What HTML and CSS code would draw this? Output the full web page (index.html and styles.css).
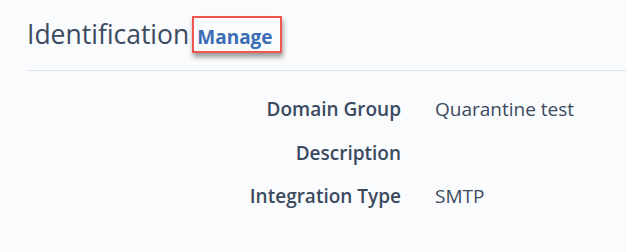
FILE: index.html
```html
<!DOCTYPE html>
<html lang="en">
<head>
  <meta charset="UTF-8">
  <title>Identification</title>
  <link rel="stylesheet" href="styles.css">
</head>
<body>

<div class="panel">
  <div class="panel-header">
    <h2>Identification</h2>
    <a class="manage" href="#">Manage</a>
  </div>

  <div class="details">
    <div class="label">Domain Group</div>
    <div class="value">Quarantine test</div>

    <div class="label">Description</div>
    <div class="value"></div>

    <div class="label">Integration Type</div>
    <div class="value">SMTP</div>
  </div>
</div>

</body>
</html>
```

FILE: styles.css
```css
body {
  margin: 0;
  background: #fafbfd;
  font-family: "Open Sans", Arial, sans-serif;
  color: #3b4a5f;
}
.panel {
  padding: 16px 0 0 27px;
}
.panel-header {
  display: flex;
  align-items: baseline;
  border-bottom: 1px solid #dde1e8;
  padding-bottom: 17px;
}
h2 {
  margin: 0;
  font-size: 26.5px;
  font-weight: 400;
  line-height: 36px;
}
.manage {
  margin-left: 3px;
  padding: 6px 7px 1px 3px;
  border: 2px solid #f0564f;
  box-shadow: 1px 4px 5px rgba(0,0,0,0.4);
  color: #3c6cb4;
  font-size: 19px;
  font-weight: 700;
  line-height: 26px;
  text-decoration: none;
}
.details {
  display: grid;
  grid-template-columns: 374px auto;
  column-gap: 34px;
  row-gap: 17.5px;
  margin-top: 25px;
  font-size: 19px;
  line-height: 26px;
}
.label {
  text-align: right;
  font-weight: 600;
}
.value {
  min-height: 26px;
}
```
